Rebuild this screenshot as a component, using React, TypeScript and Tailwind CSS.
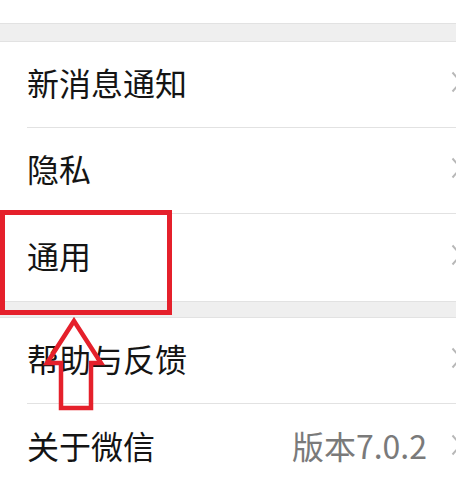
import React from "react";

const rows1 = ["新消息通知", "隐私", "通用"];

function Chevron() {
  return (
    <svg width="12" height="22" viewBox="0 0 12 22" className="shrink-0 -mr-[7px]">
      <path d="M1.5 1.5 L10 11 L1.5 20.5" fill="none" stroke="#b8b8b8" strokeWidth="2" />
    </svg>
  );
}

function Row({ label, value, divider }: { label: string; value?: string; divider: boolean }) {
  return (
    <div className="bg-white pl-[27px]">
      <div
        className={
          "flex items-center justify-between overflow-hidden pb-[5px] " +
          (divider ? "h-[86px] border-b border-[#e2e2e2]" : "h-[87px]")
        }
      >
        <span className="text-[32px] leading-none text-[#141414]">{label}</span>
        <div className="flex items-center gap-[24px]">
          {value && <span className="text-[32px] leading-none text-[#7a7a7a]">{value}</span>}
          <Chevron />
        </div>
      </div>
    </div>
  );
}

export default function App() {
  return (
    <div
      className="relative h-[491px] w-[456px] overflow-hidden bg-white"
      style={{ fontFamily: '"Noto Sans CJK SC", "Noto Sans", sans-serif' }}
    >
      <div className="h-[23px] bg-white" />
      <div className="h-[19px] border-y border-[#e2e2e2] bg-[#efefef]" />
      {rows1.map((r, i) => (
        <Row key={r} label={r} divider={i < rows1.length - 1} />
      ))}
      <div className="h-[17px] border-y border-[#e2e2e2] bg-[#efefef]" />
      <Row label="帮助与反馈" divider />
      <Row label="关于微信" value="版本7.0.2" divider={false} />

      {/* highlight box */}
      <div className="absolute left-0 top-[210px] h-[105px] w-[172px] border-[5px] border-[#e5202b]" />
      {/* arrow */}
      <svg className="absolute left-0 top-0" width="456" height="491" viewBox="0 0 456 491">
        <path
          d="M74 321 L101 363 L91 363 L91 408 L61 408 L61 363 L47 363 Z"
          fill="none"
          stroke="#e5202b"
          strokeWidth="4.5"
          strokeLinejoin="miter"
        />
      </svg>
    </div>
  );
}
